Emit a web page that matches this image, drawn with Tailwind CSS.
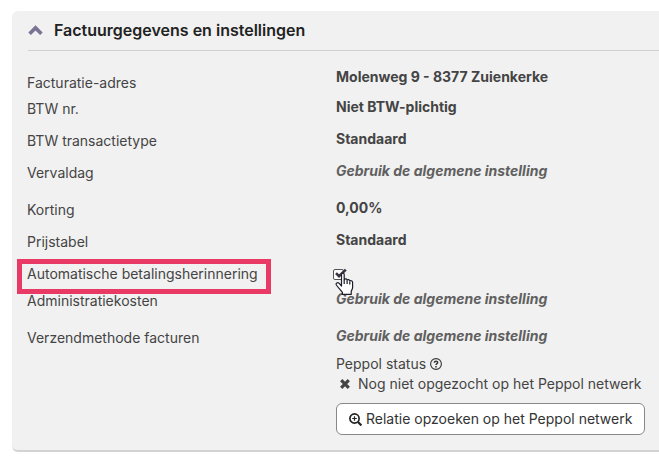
<!DOCTYPE html>
<html lang="nl">

<head>
    <meta charset="utf-8">
    <meta name="viewport" content="width=device-width, initial-scale=1">
    <title>Factuurgegevens en instellingen</title>
    <script src="https://cdn.jsdelivr.net/npm/@tailwindcss/browser@4"></script>
</head>

<body class="bg-white font-['Inter','Liberation_Sans',sans-serif] text-sm leading-5 text-[#444]">
    <section class="mt-[11px] ml-3 rounded-l-md border-b-2 border-[#d3d3d3] bg-[#f1f1f1] pb-[15px] pl-[15px]">
        <h2 class="ml-px border-b border-[#d0d0d0] text-base font-semibold text-[#222]">
            <button type="button" class="flex h-[39px] items-center gap-[11px] pb-px" aria-expanded="true">
                <svg class="h-[10px] w-[15px]" viewBox="0 0 15 10" fill="none" stroke="#7a7394" stroke-width="3.6"
                    aria-hidden="true">
                    <path d="M1.6 8.8 7.5 2.9l5.9 5.9" />
                </svg>
                <span>Factuurgegevens en instellingen</span>
            </button>
        </h2>

        <dl class="pt-4">
            <div class="flex pb-1">
                <dt class="w-[309px] shrink-0 pt-[6px]">Facturatie-adres</dt>
                <dd class="font-bold">Molenweg 9 - 8377 Zuienkerke</dd>
            </div>
            <div class="flex pb-[10px]">
                <dt class="w-[309px] shrink-0 pt-[2px]">BTW nr.</dt>
                <dd class="font-bold">Niet BTW-plichtig</dd>
            </div>
            <div class="flex pb-[10px]">
                <dt class="w-[309px] shrink-0 pt-[2px]">BTW transactietype</dt>
                <dd class="font-bold">Standaard</dd>
            </div>
            <div class="flex pb-[15px]">
                <dt class="w-[309px] shrink-0 pt-[2px]">Vervaldag</dt>
                <dd class="font-bold text-[#606060] italic">Gebruik de algemene instelling</dd>
            </div>
            <div class="flex pb-[10px]">
                <dt class="w-[309px] shrink-0 pt-[2px]">Korting</dt>
                <dd class="font-bold">0,00%</dd>
            </div>
            <div class="flex pb-[10px]">
                <dt class="w-[309px] shrink-0 pt-[2px]">Prijstabel</dt>
                <dd class="font-bold">Standaard</dd>
            </div>
            <div class="relative flex pb-[5px]">
                <dt class="w-[309px] shrink-0 pt-[2px]"><label for="reminder">Automatische betalingsherinnering</label></dt>
                <dd class="relative -ml-[3px] pt-[7px]">
                    <input type="checkbox" id="reminder" checked
                        class="block h-[11px] w-[11px] appearance-none rounded-xs border border-[#555] bg-white">
                    <svg class="pointer-events-none absolute top-[6px] left-[2px] h-[11px] w-[12px]" viewBox="0 0 12 11"
                        fill="none" stroke="#3c3340" stroke-width="2.6" aria-hidden="true">
                        <path d="M1 5.2 4 8.2 10.8 1.6" />
                    </svg>
                    <!-- hand pointer -->
                    <svg class="pointer-events-none absolute top-[10px] left-[2px] z-10 h-[24px] w-[20px]"
                        viewBox="0 0 20 24" fill="#fff" stroke="#1d1d2b" stroke-width="1.2" stroke-linejoin="round"
                        aria-hidden="true">
                        <path
                            d="M6.5 14V2.6C6.5.7 9.2.7 9.2 2.6V7.8C9.6 6.4 12 6.5 12.1 8.2C12.6 7.2 14.7 7.4 14.8 9C15.4 8.2 17.6 8.6 17.6 10.4V15.5C17.6 17 16.6 18 16.2 19.5V22.4H7.4V20.4C5.8 18 3.6 16 1.4 13C.4 11.2 2.6 9.8 4.2 11.4Z" />
                        <path d="M9.2 7.8V12M12.1 8.4V12M14.8 9.4V12.4" fill="none" />
                    </svg>
                </dd>
                <div class="pointer-events-none absolute -top-[3px] -left-[10px] h-[35px] w-[254px] border-5 border-[#e83a64]"></div>
            </div>
            <div class="flex pb-[15px]">
                <dt class="w-[309px] shrink-0 pt-[2px]">Administratiekosten</dt>
                <dd class="font-bold text-[#606060] italic">Gebruik de algemene instelling</dd>
            </div>
            <div class="flex">
                <dt class="w-[309px] shrink-0 pt-[2px]">Verzendmethode facturen</dt>
                <dd>
                    <p class="font-bold text-[#606060] italic">Gebruik de algemene instelling</p>
                    <p class="mt-2 flex items-center gap-1">
                        Peppol status
                        <svg class="h-3 w-3" viewBox="0 0 12 12" fill="none" stroke="#333" aria-hidden="true">
                            <circle cx="6" cy="6" r="5.4" stroke-width="1.1" />
                            <path d="M4.2 4.7C4.4 2.7 7.8 2.8 7.7 4.6C7.6 5.7 6 5.6 6 7.1" stroke-width="1.4" />
                            <path d="M6 8V9.4" stroke-width="1.5" />
                        </svg>
                    </p>
                    <p class="flex items-center gap-2 pl-1">
                        <svg class="h-[10px] w-[10px]" viewBox="0 0 10 10" stroke="#444" stroke-width="3.2"
                            aria-hidden="true">
                            <path d="M1.2 1.2 8.8 8.8M8.8 1.2 1.2 8.8" />
                        </svg>
                        Nog niet opgezocht op het Peppol netwerk
                    </p>
                    <button type="button"
                        class="mt-[9px] flex h-8 items-center gap-1 rounded-md border border-[#888] bg-white px-3 text-[#333]">
                        <svg class="h-[13px] w-[13px]" viewBox="0 0 13 13" fill="none" stroke="#222" aria-hidden="true">
                            <circle cx="5.5" cy="5.5" r="4.6" stroke-width="1.7" />
                            <path d="M9 9 12.4 12.4" stroke-width="2.2" />
                            <path d="M5.5 3.2V7.8M3.2 5.5H7.8" stroke-width="1.2" />
                        </svg>
                        Relatie opzoeken op het Peppol netwerk
                    </button>
                </dd>
            </div>
        </dl>
    </section>
</body>

</html>
